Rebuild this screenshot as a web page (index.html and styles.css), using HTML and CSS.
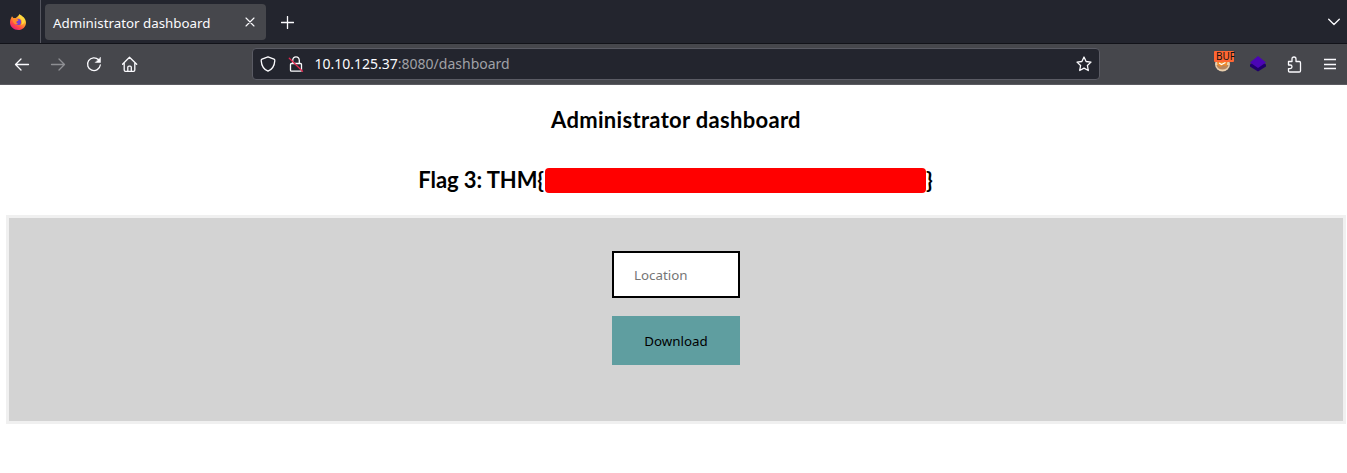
FILE: index.html
```html
<!DOCTYPE html>
<html lang="en">
<head>
<meta charset="utf-8">
<title>Administrator dashboard</title>
<link rel="stylesheet" href="styles.css">
</head>
<body>
<header class="tabs">
  <div class="pinned">
    <svg width="18" height="18" viewBox="0 0 18 18">
      <defs>
        <linearGradient id="flame" x1=".85" y1=".05" x2=".25" y2=".95"><stop offset="0" stop-color="#fff04a"/><stop offset=".45" stop-color="#ff9a2b"/><stop offset=".75" stop-color="#ff4a45"/><stop offset="1" stop-color="#e8207c"/></linearGradient>
      </defs>
      <path fill="url(#flame)" d="M3 3.2 4.6 5.2 6.8 5 9.2 3 10.4 1.2C13.8 3 16.8 5.6 17 9.4c0 4.3-3.4 7.6-7.8 7.6S1 13.700 1 9.500C1 7 1.900 5.200 3 3.200Z"/>
      <circle cx="8.900" cy="8.900" r="3.200" fill="#7542d5"/>
      <path fill="#ff8b2c" d="M3.600 5.300c2-.6 3.800-.3 4.800 1l1.200.8c-.3 1-1.600 1-2.100 1.600-.4.800.4 2 1.800 2-1.100 1.100-3.300.9-4.300-.5C4 9 3.200 7.200 3.600 5.300Z"/>
      <path fill="#ffd83d" d="M10.500 1.200c-1 2.300.3 3.700 1.700 5 1.400 1.500 1.200 4-.2 5.500 3-.7 4.700-3.200 3.800-5.800-.5 0-.8-.5-1-1C13.500 3.600 11 3.400 10.500 1.200Z"/>
    </svg>
  </div>
  <div class="tab"><span>Administrator dashboard</span>
    <svg class="line" width="10" height="10" viewBox="0 0 10 10"><path d="M1 1l8 8M9 1l-8 8"/></svg>
  </div>
  <svg class="line plus" width="13" height="13" viewBox="0 0 13 13"><path d="M6.500.5v12M.5 6.500h12"/></svg>
  <svg class="line chevron" width="12" height="8" viewBox="0 0 12 8"><path d="M.7 1.200 6 6.500l5.300-5.300"/></svg>
</header>
<nav class="toolbar">
  <div class="controls">
    <svg class="line" width="16" height="16" viewBox="0 0 16 16"><path d="M14.500 8.500H1.500M7 3 1.500 8.500 7 14"/></svg>
    <svg class="line dim" width="16" height="16" viewBox="0 0 16 16"><path d="M1.500 8.500h13M9 3l5.500 5.500L9 14"/></svg>
    <svg class="line" width="16" height="16" viewBox="0 0 16 16"><path d="M12.600 3.800A6.400 6.400 0 1 0 14.300 9"/><path class="solid" d="M14.500 1.500v5h-5Z"/></svg>
    <svg class="line" width="16" height="16" viewBox="0 0 16 16"><path d="M.5 8.200 7.500 1.300l7.200 6.900M2.200 7v7q0 1.300 1.300 1.300h8q1.300 0 1.300-1.300V7M5.800 15v-3.700q0-1.200 1.200-1.200h1.100q1.200 0 1.200 1.200V15"/></svg>
  </div>
  <div class="address">
    <svg class="line" width="16" height="16" viewBox="0 0 16 16"><path d="M8 .8 14 3.200q.9.400.8 1.400C14.500 9.600 12.300 13.300 8 15.200 3.700 13.300 1.500 9.600 1.200 4.600q-.1-1 .8-1.400Z"/></svg>
    <svg class="line lock" width="16" height="16" viewBox="0 0 16 16"><path d="M4.700 7.500V4.200Q5 .9 8 .9t3.300 3.300v3.300M3.500 7.500h9q1 0 1 1v5.700q0 1-1 1h-9q-1 0-1-1V8.500q0-1 1-1Z"/><path class="slash" d="M1.300 2.300 14.500 15.300"/></svg>
    <span class="url">10.10.125.37<span>:8080/dashboard</span></span>
    <svg class="line star" width="16" height="16" viewBox="0 0 16 16"><path d="m8 1 2.100 4.500 4.900.6-3.600 3.400.9 5L8 12.100l-4.300 2.400.9-5L1 6.100l4.900-.6Z"/></svg>
  </div>
  <div class="extensions">
    <svg width="22" height="24" viewBox="0 0 22 24">
      <circle cx="9.500" cy="13" r="7.500" fill="#e9cfad"/><path d="M3.500 14c1 6 11 6 12 0Z" fill="#b9855c"/><path d="M4 10.500h10.500l-1 5-3-1.500-3 2-3-2Z" fill="#ef8b2b"/><path d="m6 12 2.500 1.500 4-2" fill="none" stroke="#fff" stroke-width="1.200"/>
      <rect x="1" width="20" height="11" rx="1" fill="#ff6633"/>
      <text class="badge" x="3" y="9">BUF</text>
    </svg>
    <svg class="layers" width="16" height="16" viewBox="0 0 16 16"><path fill="#20006b" d="m0 8.500 8-5 8 5v2l-8 5-8-5Z"/><path fill="#4b05b5" d="m8 0 8 6.500-8 5.500L0 6.500Z"/></svg>
    <svg class="line puzzle" width="15" height="17" viewBox="0 0 15 17"><path d="M1.500 5.500H5V3q0-2 2-2t2 2v2.500h3.300q1.200 0 1.200 1.200v8q0 1.300-1.200 1.300H2.700q-1.200 0-1.200-1.200v-2.200h1.700q1.800 0 1.800-1.800T3.200 9H1.500Z"/></svg>
    <svg class="line menu" width="12" height="12" viewBox="0 0 12 12"><path d="M0 1.500h12M0 6.500h12M0 10.500h12"/></svg>
  </div>
</nav>
<main>
  <h2>Administrator dashboard</h2>
  <h2 class="flag"><span>Flag 3: THM{</span><span class="redacted"></span><span>}</span></h2>
  <form class="panel">
    <input type="text" placeholder="Location" aria-label="Location">
    <button type="button">Download</button>
  </form>
</main>
</body>
</html>
```
FILE: styles.css
```css
* { box-sizing: border-box; }
body { margin: 0; background: #fff; color: #000; font-family: "Noto Sans", sans-serif; overflow: hidden; }
svg { display: block; flex: none; }
.line { fill: none; stroke: #fbfbfe; stroke-width: 1.3; stroke-linejoin: round; stroke-linecap: round; }
.line .solid { fill: #fbfbfe; stroke-width: .5; }
.dim { opacity: .4; }
.tabs { height: 44px; display: flex; align-items: center; background: #23252e; border-bottom: 1px solid #121319; }
.pinned { width: 41px; height: 43px; padding: 13px 0 0 9px; border-right: 1px solid #55565f; }
.tab { width: 221px; height: 36px; margin: 1px 0 0 4px; padding: 0 11px 0 8px; display: flex; align-items: center; justify-content: space-between; border-radius: 4px; background: #46474c; color: #fbfbfe; font-size: 13.333px; }
.tab span { padding-top: 2px; }
.tab svg { stroke-width: 1.1; }
.plus { margin: 2px 0 0 15px; }
.chevron { margin: 0 7px 0 auto; }
.toolbar { height: 41px; display: flex; align-items: center; background: #46474c; border-bottom: 1px solid #5b5b61; }
.controls { width: 252px; padding-left: 14px; display: flex; gap: 20px; }
.address { width: 848px; height: 32px; display: flex; align-items: center; padding: 0 7px; background: #23252e; border: 1px solid #5a5b64; border-radius: 4px; }
.lock { margin-left: 12px; }
.line .slash { stroke: #e22850; }
.url { margin-left: 10.5px; color: #fbfbfe; font-size: 14px; line-height: 30px; }
.url span { color: #a0a1a7; }
.star { margin-left: auto; }
.extensions { margin-left: 113px; display: flex; align-items: center; }
.badge { font: 10px "Noto Sans", sans-serif; fill: #111; }
.extensions svg:first-child { margin-top: -3px; }
.layers { margin-left: 15px; }
.puzzle { margin-left: 21px; }
.menu { margin-left: 22px; stroke-linecap: butt; }
main { padding: 20px 1px 0 6px; }
h2 { height: 30px; margin: 0; font: bold 22px/30px Lato, sans-serif; letter-spacing: .31px; text-align: center; }
.flag { margin-top: 30px; padding-right: 1px; display: flex; justify-content: center; letter-spacing: -.08px; }
.redacted { width: 381px; height: 25px; margin: 3px 0 0 1px; border-radius: 4px; background: #f00; }
.panel { height: 209px; margin-top: 20px; padding-top: 33px; display: flex; flex-direction: column; align-items: center; gap: 18px; background: #d3d3d3; border: 3px solid #f0f0f0; }
input, button { width: 128px; font: 13.333px "Noto Sans", sans-serif; border-radius: 0; }
input { height: 47px; padding: 0 20px; border: 2px solid #000; background: #fff; }
input::placeholder { color: #757575; opacity: 1; }
button { height: 49px; border: 0; padding: 0; background: #5f9ea0; color: #000; }
```
